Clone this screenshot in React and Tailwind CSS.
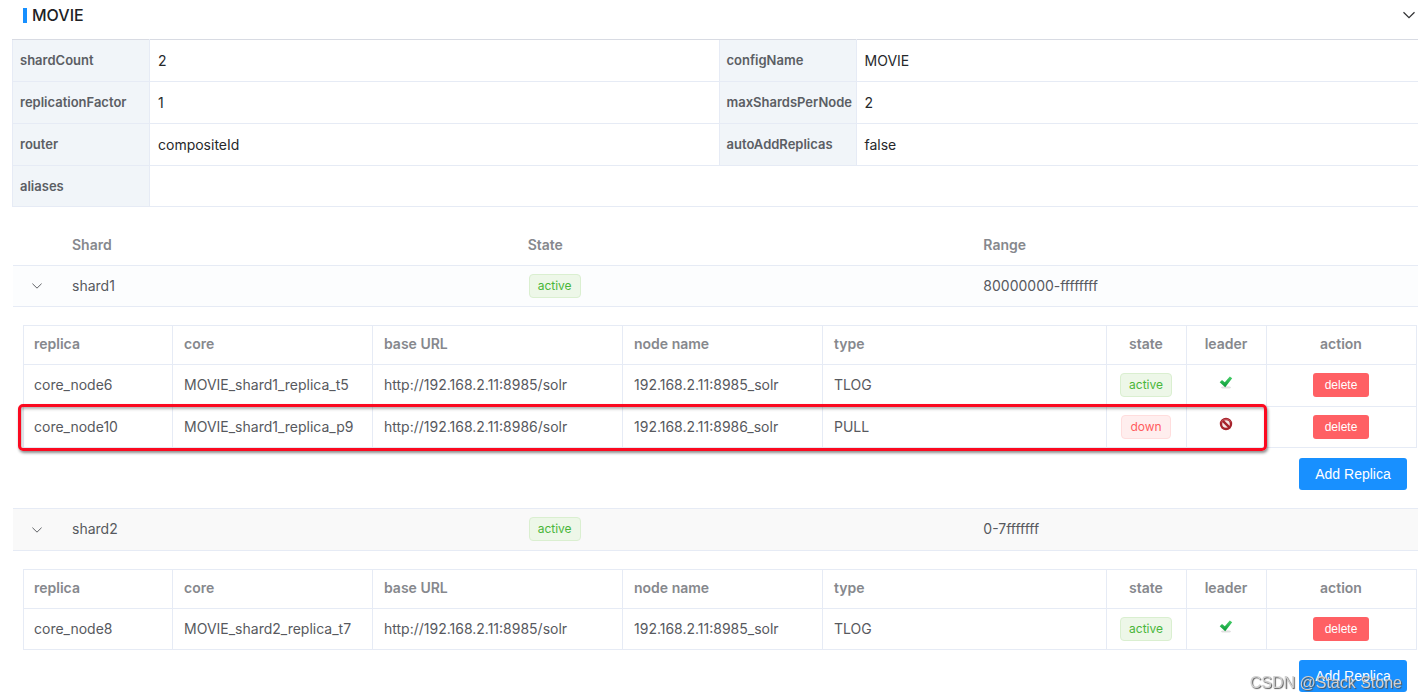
import { useState } from "react";

const details = [
  ["shardCount", "2", "configName", "MOVIE"],
  ["replicationFactor", "1", "maxShardsPerNode", "2"],
  ["router", "compositeId", "autoAddReplicas", "false"],
];

const shards = [
  {
    name: "shard1",
    state: "active",
    range: "80000000-ffffffff",
    rowClass: "h-[41px] bg-[#fcfdfe]",
    highlightLast: true,
    replicas: [
      {
        name: "core_node6",
        core: "MOVIE_shard1_replica_t5",
        url: "http://192.168.2.11:8985/solr",
        node: "192.168.2.11:8985_solr",
        type: "TLOG",
        state: "active",
        leader: true,
      },
      {
        name: "core_node10",
        core: "MOVIE_shard1_replica_p9",
        url: "http://192.168.2.11:8986/solr",
        node: "192.168.2.11:8986_solr",
        type: "PULL",
        state: "down",
        leader: false,
      },
    ],
  },
  {
    name: "shard2",
    state: "active",
    range: "0-7fffffff",
    rowClass: "h-[42px] bg-[#f9f9f9]",
    highlightLast: false,
    replicas: [
      {
        name: "core_node8",
        core: "MOVIE_shard2_replica_t7",
        url: "http://192.168.2.11:8985/solr",
        node: "192.168.2.11:8985_solr",
        type: "TLOG",
        state: "active",
        leader: true,
      },
    ],
  },
];

function Chevron({ className }) {
  return (
    <svg
      className={className}
      viewBox="0 0 12 12"
      fill="none"
      stroke="currentColor"
      strokeWidth="1.2"
      aria-hidden="true"
    >
      <path d="M0.5 3.2 6 8.6 11.5 3.2" />
    </svg>
  );
}

function StateTag({ state }) {
  const color =
    state === "active"
      ? "bg-[#edf7e8] border-[#daefd0] text-[#49b63a]"
      : "bg-[#ffeeee] border-[#ffdddd] text-[#ff5c60]";
  return (
    <span
      className={`inline-block h-6 px-2 rounded border align-middle text-xs leading-[22px] ${color}`}
    >
      {state}
    </span>
  );
}

function LeaderIcon({ leader }) {
  if (leader) {
    return (
      <svg
        className="inline-block w-4 h-4 mb-1.5"
        viewBox="0 0 16 16"
        role="img"
        aria-label="leader"
      >
        <defs>
          <linearGradient id="tick" x1="0" y1="0" x2="0" y2="1">
            <stop offset="0" stopColor="#4bd06c" />
            <stop offset="1" stopColor="#069a35" />
          </linearGradient>
        </defs>
        <ellipse cx="8" cy="13.4" rx="5" ry="1.2" fill="#000" opacity="0.12" />
        <path
          d="M1.7 8.2 4 6 6.8 8.2 11.8 2.4 14.2 4.2 7.2 13.2Z"
          fill="url(#tick)"
        />
      </svg>
    );
  }
  return (
    <svg
      className="inline-block w-4 h-4 mb-1.5"
      viewBox="0 0 16 16"
      role="img"
      aria-label="not leader"
    >
      <circle cx="8" cy="8" r="5" fill="#f4e6e6" stroke="#a5222b" strokeWidth="2.4" />
      <path d="M4.6 4.6 11.4 11.4" stroke="#a5222b" strokeWidth="2.4" />
      <path d="M3.2 6.4A5.2 5.2 0 0 1 12.8 6.4" fill="none" stroke="#cf6067" strokeWidth="0.8" />
    </svg>
  );
}

function ReplicaTable({ replicas, highlightLast }) {
  return (
    <div className="relative">
      <table className="w-full table-fixed border-collapse text-left [&_td]:border [&_td]:border-[#e6ebf5] [&_td]:pl-[11px] [&_td]:pr-3 [&_th]:border [&_th]:border-[#e6ebf5] [&_th]:pl-[11px] [&_th]:pr-3 [&_th]:pb-px [&_tr>:first-child]:pl-[10px]">
        <colgroup>
          <col className="w-[149px]" />
          <col className="w-[200px]" />
          <col className="w-[250px]" />
          <col className="w-[200px]" />
          <col />
          <col className="w-20" />
          <col className="w-20" />
          <col className="w-[150px]" />
        </colgroup>
        <thead>
          <tr className="h-[39px] text-[#86888d] [&>th]:font-semibold">
            <th>replica</th>
            <th>core</th>
            <th>base URL</th>
            <th>node name</th>
            <th>type</th>
            <th className="text-center">state</th>
            <th className="text-center">leader</th>
            <th className="text-center">action</th>
          </tr>
        </thead>
        <tbody>
          {replicas.map((r) => (
            <tr key={r.name} className="h-[41px] not-last:h-[42px]">
              <td>{r.name}</td>
              <td className="whitespace-nowrap">{r.core}</td>
              <td className="whitespace-nowrap">{r.url}</td>
              <td className="whitespace-nowrap">{r.node}</td>
              <td>{r.type}</td>
              <td className="text-center">
                <StateTag state={r.state} />
              </td>
              <td className="text-center">
                <LeaderIcon leader={r.leader} />
              </td>
              <td className="text-center">
                <button
                  type="button"
                  className="h-6 w-14 rounded-[3px] bg-[#ff6064] align-middle font-['Liberation_Sans',sans-serif] text-xs font-medium text-white"
                >
                  delete
                </button>
              </td>
            </tr>
          ))}
        </tbody>
      </table>
      {highlightLast && (
        <div className="pointer-events-none absolute -bottom-[3px] -left-[5px] right-[150px] h-[47px] rounded-[5px] border-3 border-[#fb0a20] shadow-[1px_2px_3px_rgba(0,0,0,0.45),inset_1px_2px_3px_rgba(0,0,0,0.3)]" />
      )}
    </div>
  );
}

function ShardRows({ shard }) {
  const [open, setOpen] = useState(true);
  return (
    <>
      <tr className={`border-y border-[#e6ebf5] ${shard.rowClass}`}>
        <td className="pb-px text-center">
          <button
            type="button"
            aria-label={`Toggle ${shard.name}`}
            aria-expanded={open}
            onClick={() => setOpen(!open)}
            className="align-middle"
          >
            <Chevron className="w-[10px] h-[10px] text-[#606266]" />
          </button>
        </td>
        <td className="px-[11px]">{shard.name}</td>
        <td className="px-3">
          <StateTag state={shard.state} />
        </td>
        <td className="px-[11px]">{shard.range}</td>
      </tr>
      {open && (
        <tr className="last:[&>td]:pb-1">
          <td colSpan={4} className="pt-[18px] pb-[18px] pl-[10px] pr-[11px]">
            <ReplicaTable
              replicas={shard.replicas}
              highlightLast={shard.highlightLast}
            />
            <div className="mt-[10px] mr-[10px] flex justify-end">
              <button
                type="button"
                className="h-8 w-[108px] rounded-[3px] bg-[#1890ff] font-['Liberation_Sans',sans-serif] text-sm font-medium text-white"
              >
                Add Replica
              </button>
            </div>
          </td>
        </tr>
      )}
    </>
  );
}

export default function App() {
  const [expanded, setExpanded] = useState(true);

  return (
    <div className="min-h-screen overflow-x-hidden bg-white font-[Inter,'Liberation_Sans',sans-serif] text-sm text-[#57595e]">
      <header className="flex h-[39px] items-start justify-between pl-[23px] pr-[3px] pt-[3px]">
        <h1 className="flex items-center gap-[5px] text-base font-medium leading-6 text-[#202124]">
          <span className="h-[15px] w-1 bg-[#1890ff]" />
          MOVIE
        </h1>
        <button
          type="button"
          aria-label="Toggle collection"
          aria-expanded={expanded}
          onClick={() => setExpanded(!expanded)}
          className="pt-[6px]"
        >
          <Chevron className="h-3 w-3 text-[#303133]" />
        </button>
      </header>

      {expanded && (
        <main className="-mr-[10px] pl-3">
          <table className="w-[calc(100%-2px)] table-fixed border-collapse border border-[#e6ebf5] border-t-[#d8dbe3] text-left text-[#26282b] [&_td]:border-b [&_td]:border-[#e6ebf5] [&_td]:px-2 [&_th]:border [&_th]:border-[#e6ebf5] [&_th]:border-t-[#d8dbe3] [&_th]:bg-[#f1f5f9] [&_th]:px-[7px] [&_th]:text-[13px] [&_th]:font-semibold [&_th]:text-[#5b5e64]">
            <colgroup>
              <col className="w-[137px]" />
              <col />
              <col className="w-[137px]" />
              <col />
            </colgroup>
            <tbody>
              {details.map(([k1, v1, k2, v2]) => (
                <tr key={k1} className="h-[42px] [&:not(:first-child)>th]:border-t-[#e6ebf5]">
                  <th scope="row">{k1}</th>
                  <td>{v1}</td>
                  <th scope="row">{k2}</th>
                  <td>{v2}</td>
                </tr>
              ))}
              <tr className="h-[41px]">
                <th scope="row" className="border-t-[#e6ebf5]!">
                  aliases
                </th>
                <td colSpan={3} />
              </tr>
            </tbody>
          </table>

          <table className="ml-px mt-[18px] w-[calc(100%-1px)] table-fixed border-collapse text-left">
            <colgroup>
              <col className="w-12" />
              <col />
              <col />
              <col />
            </colgroup>
            <thead>
              <tr className="h-10 text-[#86888d] [&>th]:px-[11px] [&>th]:font-semibold">
                <th aria-label="Toggle" />
                <th>Shard</th>
                <th>State</th>
                <th>Range</th>
              </tr>
            </thead>
            <tbody>
              {shards.map((shard) => (
                <ShardRows key={shard.name} shard={shard} />
              ))}
            </tbody>
          </table>
        </main>
      )}

      <div className="pointer-events-none fixed bottom-1 right-4 font-['Liberation_Sans',sans-serif] text-base leading-6 text-[#d0d0d0] [text-shadow:1px_1px_1px_#555]">
        CSDN @Stack Stone
      </div>
    </div>
  );
}
